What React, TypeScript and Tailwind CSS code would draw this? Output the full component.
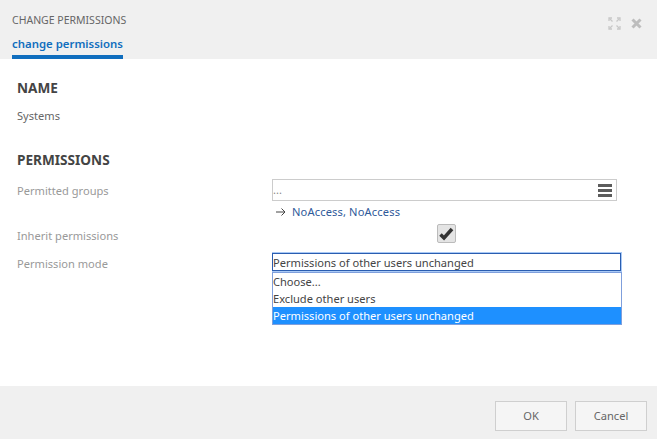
import React from "react";

function Row({ label, children, className }: { label: string; children: React.ReactNode; className?: string }) {
  return (
    <div className={"flex " + (className ?? "")}>
      <div className="w-[255px] shrink-0 text-[11.100px] leading-[16px] text-[#999]">{label}</div>
      {children}
    </div>
  );
}

export default function App() {
  return (
    <div className="flex h-[439px] w-[657px] flex-col overflow-hidden bg-white font-['Noto_Sans','Open_Sans',sans-serif] text-[11.100px] text-[#444]">
      <header className="relative h-[59px] shrink-0 bg-[#f0f0f0] pl-[12px]">
        <div className="pt-[13px] text-[10.500px] leading-[15px] text-[#666]">CHANGE PERMISSIONS</div>
        <div className="mt-[8px] w-[111px] border-b-[4px] border-[#106ebe] pb-[4px] text-[11.400px] leading-[15px] font-semibold text-[#106ebe] whitespace-nowrap">
          change permissions
        </div>
        <div className="absolute left-[608px] top-[17px] flex items-center gap-[10px]">
          <svg width="13" height="13" viewBox="0 0 13 13" fill="none" stroke="#c8c8c8" strokeWidth="1.300">
            <path d="M1 4V1h3M9 1h3v3M12 9v3H9M4 12H1V9" />
            <path d="M1.500 1.500L4.500 4.500M11.500 1.500L8.500 4.500M11.500 11.500L8.500 8.500M1.500 11.500L4.500 8.500" />
          </svg>
          <svg width="11" height="11" viewBox="0 0 11 11" stroke="#bdbdbd" strokeWidth="3">
            <path d="M1.500 1.500L9.500 9.500M9.500 1.500L1.500 9.500" />
          </svg>
        </div>
      </header>

      <main className="flex-1 pl-[17px] pr-[35px]">
        <h2 className="mt-[19px] text-[13.600px] leading-[19px] font-bold text-[#444]">NAME</h2>
        <p className="mt-[11px] leading-[16px] text-[#666]">Systems</p>

        <h2 className="mt-[26px] text-[13.600px] leading-[19px] font-bold text-[#444]">PERMISSIONS</h2>

        <Row label="Permitted groups" className="mt-[14px]">
          <div className="-mt-[4px] w-[345px]">
            <div className="flex h-[22px] items-center justify-between border border-[#cccccc] pr-[4px] text-[#888]">
              <span className="leading-[16px]">...</span>
              <span className="flex w-[14px] flex-col gap-[2px]">
                <i className="h-[3px] bg-[#5c5c5c]" />
                <i className="h-[3px] bg-[#5c5c5c]" />
                <i className="h-[3px] bg-[#5c5c5c]" />
              </span>
            </div>
            <div className="mt-[3px] flex items-center pl-[3px] leading-[16px]">
              <svg width="12" height="10" viewBox="0 0 12 10" fill="none" stroke="#444" strokeWidth="1" className="mr-[5px]">
                <path d="M1 5h9M6.500 1.500L10 5L6.500 8.500" />
              </svg>
              <span className="text-[#2f5a9a] tracking-[0.15px]">NoAccess, NoAccess</span>
            </div>
          </div>
        </Row>

        <Row label="Inherit permissions" className="mt-[8px]">
          <div className="flex w-[349px] justify-center">
            <div className="-mt-[4px] flex h-[19px] w-[19px] items-center justify-center rounded-[2px] border border-[#bbb] bg-[#e4e4e4]">
              <svg width="15" height="14" viewBox="0 0 15 14" fill="none" stroke="#333" strokeWidth="3.500">
                <path d="M1.500 7.500L5 11L13 2" />
              </svg>
            </div>
          </div>
        </Row>

        <Row label="Permission mode" className="mt-[12px]">
          <div className="relative -mt-[4px] h-[20px] w-[350px]">
            <div className="h-[20px] border-y border-r border-[#a9c9f5] pl-[1px] leading-[19px] text-[#444] whitespace-nowrap shadow-[inset_0_0_0_1px_#2a5db0]">
              Permissions of other users unchanged
            </div>
            <ul className="absolute left-0 top-[20px] w-[350px] border border-[#7f9fdc] bg-white leading-[17px] text-[#444]">
              <li>Choose...</li>
              <li>Exclude other users</li>
              <li className="bg-[#1e90ff] text-white">Permissions of other users unchanged</li>
            </ul>
          </div>
        </Row>
      </main>

      <footer className="flex h-[53px] shrink-0 items-start justify-end gap-[8px] bg-[#f0f0f0] pr-[10px] pt-[15px]">
        <button className="h-[30px] w-[72px] border border-[#cfcfcf] bg-[#f5f5f5] text-[#666]">OK</button>
        <button className="h-[30px] w-[72px] border border-[#cfcfcf] bg-[#f5f5f5] text-[#666]">Cancel</button>
      </footer>
    </div>
  );
}
